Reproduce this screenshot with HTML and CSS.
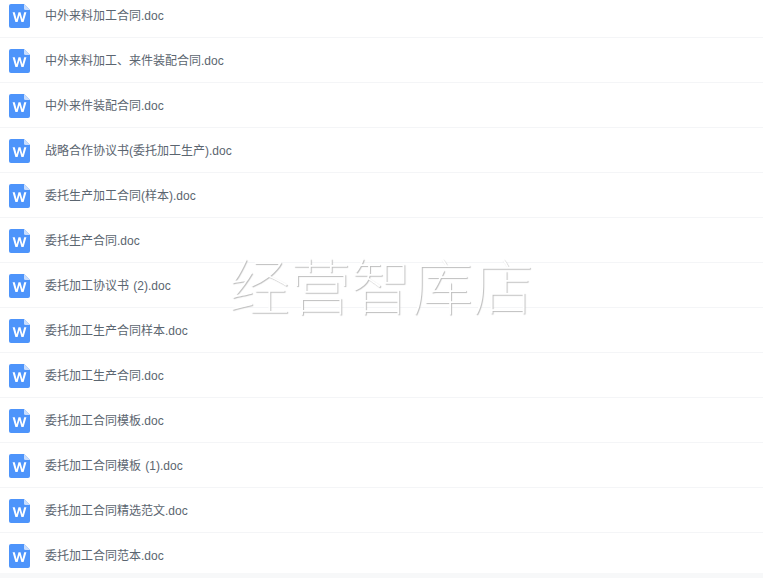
FILE: index.html
```html
<!DOCTYPE html>
<html lang="zh-CN">
<head>
    <meta charset="UTF-8">
    <meta name="viewport" content="width=device-width, initial-scale=1.0">
    <title>委托加工合同</title>
    <link rel="stylesheet" href="styles.css">
</head>
<body>
    <svg class="sprite" width="0" height="0">
        <symbol id="icon-word" viewBox="0 0 21 24">
            <path d="M2 0H15L21 6V22a2 2 0 0 1-2 2H2a2 2 0 0 1-2-2V2a2 2 0 0 1 2-2z" fill="#4d94fb"/>
            <path d="M15 0L21 6H16.5A1.5 1.5 0 0 1 15 4.5z" fill="#c9defd"/>
            <path d="M3.6 8.2H5.8L7.6 15.2L9.5 8.2H11.5L13.4 15.2L15.2 8.2H17.4L14.6 18H12.4L10.5 11.2L8.6 18H6.4z" fill="#fff"/>
        </symbol>
    </svg>
    <ul class="file-list">
        <li class="file-item"><svg class="file-icon"><use href="#icon-word"/></svg><span class="file-name">中外来料加工合同.doc</span></li>
        <li class="file-item"><svg class="file-icon"><use href="#icon-word"/></svg><span class="file-name">中外来料加工、来件装配合同.doc</span></li>
        <li class="file-item"><svg class="file-icon"><use href="#icon-word"/></svg><span class="file-name">中外来件装配合同.doc</span></li>
        <li class="file-item"><svg class="file-icon"><use href="#icon-word"/></svg><span class="file-name">战略合作协议书(委托加工生产).doc</span></li>
        <li class="file-item"><svg class="file-icon"><use href="#icon-word"/></svg><span class="file-name">委托生产加工合同(样本).doc</span></li>
        <li class="file-item"><svg class="file-icon"><use href="#icon-word"/></svg><span class="file-name">委托生产合同.doc</span></li>
        <li class="file-item"><svg class="file-icon"><use href="#icon-word"/></svg><span class="file-name">委托加工协议书 (2).doc</span></li>
        <li class="file-item"><svg class="file-icon"><use href="#icon-word"/></svg><span class="file-name">委托加工生产合同样本.doc</span></li>
        <li class="file-item"><svg class="file-icon"><use href="#icon-word"/></svg><span class="file-name">委托加工生产合同.doc</span></li>
        <li class="file-item"><svg class="file-icon"><use href="#icon-word"/></svg><span class="file-name">委托加工合同模板.doc</span></li>
        <li class="file-item"><svg class="file-icon"><use href="#icon-word"/></svg><span class="file-name">委托加工合同模板 (1).doc</span></li>
        <li class="file-item"><svg class="file-icon"><use href="#icon-word"/></svg><span class="file-name">委托加工合同精选范文.doc</span></li>
        <li class="file-item"><svg class="file-icon"><use href="#icon-word"/></svg><span class="file-name">委托加工合同范本.doc</span></li>
    </ul>
    <div class="watermark">经营智库店</div>
</body>
</html>
```

FILE: styles.css
```css
html, body {
    height: 100%;
}
body {
    margin: 0;
    background-color: #f7f8f9;
    font-family: "Liberation Sans", "Noto Sans CJK SC", sans-serif;
    color: #5b6570;
    overflow: hidden;
    position: relative;
}
.sprite {
    position: absolute;
}
.file-list {
    list-style: none;
    margin: -7px 0 0;
    padding: 0;
    height: 580px;
    overflow: hidden;
    background-color: #fff;
}
.file-item {
    display: flex;
    align-items: center;
    box-sizing: border-box;
    height: 45px;
    padding: 2px 0 0 9px;
    border-bottom: 1px solid #f4f5f7;
}
.file-icon {
    width: 21px;
    height: 24px;
    flex-shrink: 0;
    margin-right: 15px;
}
.file-name {
    font-size: 12px;
    line-height: 16px;
    word-spacing: 1px;
}
.watermark {
    position: absolute;
    left: 229px;
    top: 246px;
    font-family: "Noto Sans CJK SC", sans-serif;
    font-weight: 100;
    font-size: 61px;
    line-height: 76px;
    white-space: nowrap;
    color: #fff;
    text-shadow: 1px 1px 1px #bdbdbd;
}
```
